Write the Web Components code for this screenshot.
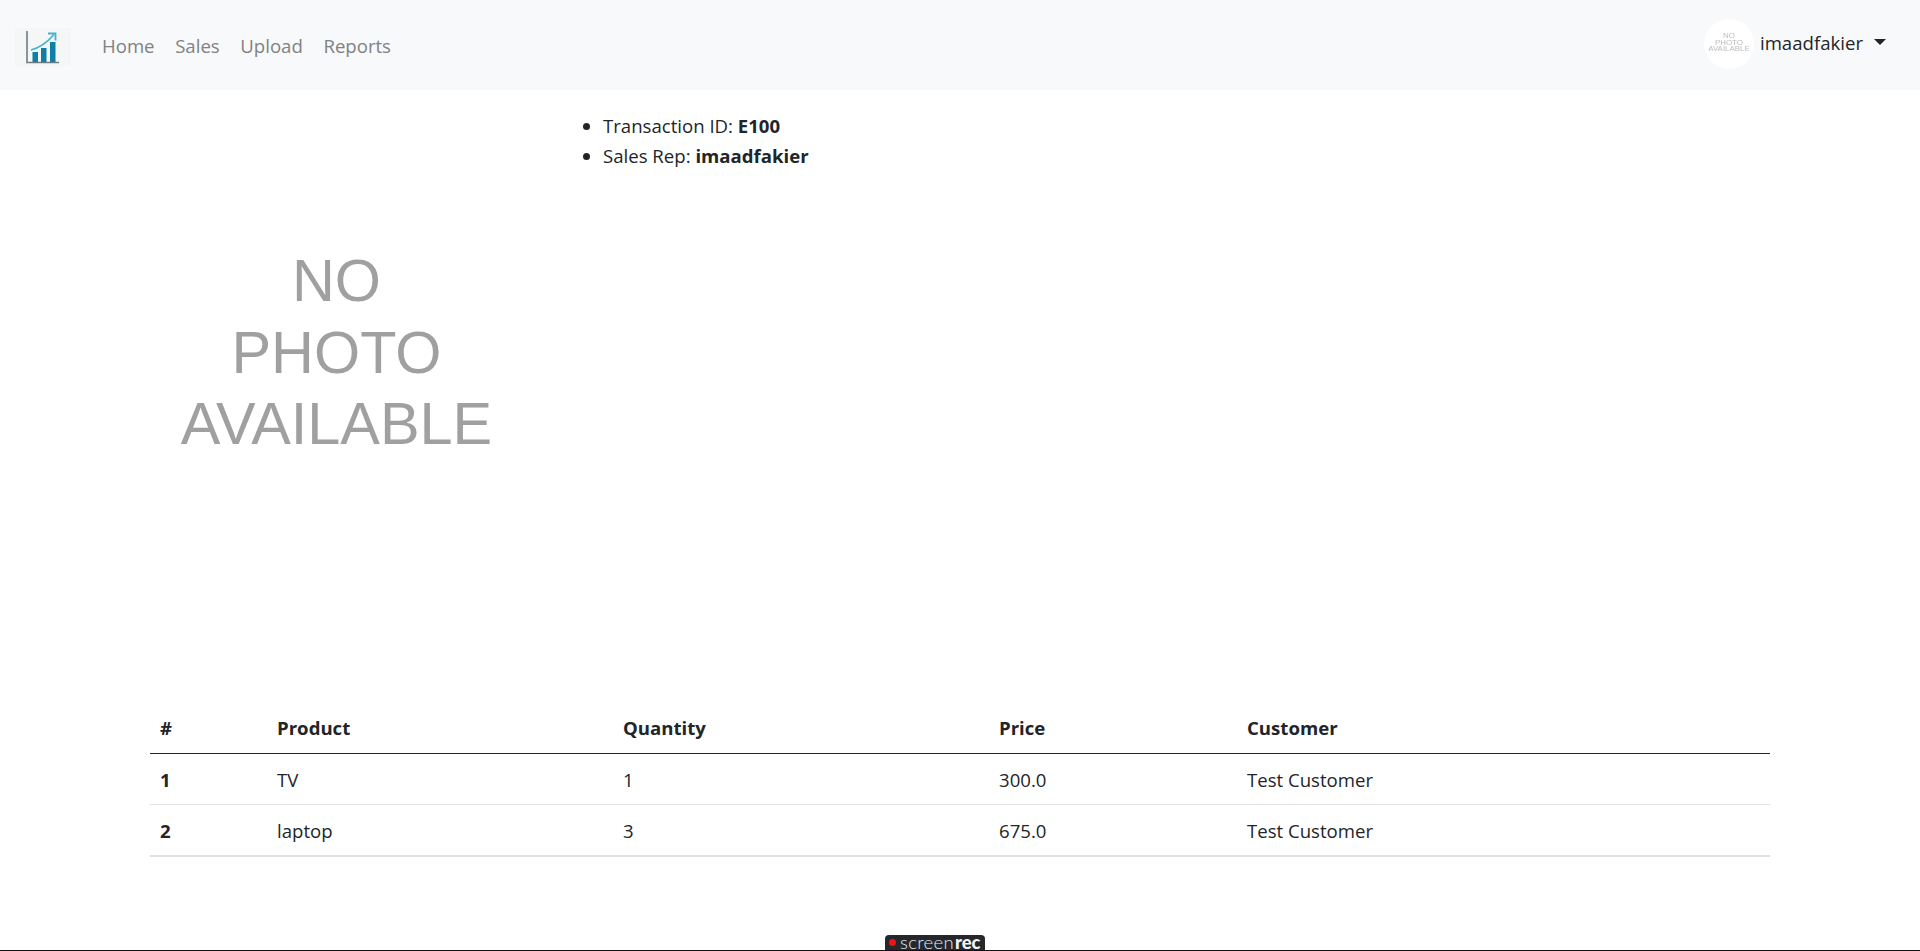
<!DOCTYPE html>
<html lang="en">
<head>
<meta charset="utf-8">
<title>Sale</title>
<style>
html,body{margin:0;padding:0;background:#fff}
body{font-family:"Open Sans","Noto Sans",sans-serif;font-size:18.6px;line-height:30px;color:#212529;height:951px;overflow:hidden;position:relative}
</style>
</head>
<body>
<app-navbar>
  <nav-link>Home</nav-link>
  <nav-link>Sales</nav-link>
  <nav-link>Upload</nav-link>
  <nav-link>Reports</nav-link>
</app-navbar>
<sale-page>
  <sale-photo slot="photo"></sale-photo>
  <sale-facts slot="facts">
    <li>Transaction ID: <b>E100</b></li>
    <li>Sales Rep: <b>imaadfakier</b></li>
  </sale-facts>
  <sale-table slot="table"></sale-table>
</sale-page>
<rec-badge></rec-badge>
<script>
function def(name, css, html, init){
  customElements.define(name, class extends HTMLElement{
    constructor(){super();const r=this.attachShadow({mode:"open"});r.innerHTML="<style>"+css+"</style>"+html;}
    connectedCallback(){if(init)init(this.shadowRoot,this);}
  });
}
def("nav-link",":host{display:block;color:#808183;margin-right:20.6px}","<slot></slot>");
def("brand-logo",":host{display:block;width:56px;height:38px;background:#f5f6f6}svg{display:block}",
`<svg width="56" height="38" viewBox="0 0 56 38">
<path d="M12 3V34.5H44" fill="none" stroke="#6f7c84" stroke-width="1.6"/>
<rect x="17.5" y="24" width="5.5" height="10" fill="#0f7fa6"/>
<rect x="26" y="20" width="5.5" height="14" fill="#0f7fa6"/>
<rect x="35" y="14" width="5.5" height="20" fill="#0f7fa6"/>
<path d="M16 22C24 20 32 14.5 39 6.5" fill="none" stroke="#3fb3cf" stroke-width="1.7"/>
<path d="M33 5.5H40.5V12.5" fill="none" stroke="#3fb3cf" stroke-width="1.8"/>
</svg>`);
def("user-avatar",`:host{display:flex;width:50px;height:50px;border-radius:50%;background:#fff;align-items:center;justify-content:center;overflow:hidden;margin-top:2px}
div{font:7.9px/6.8px "Liberation Sans",sans-serif;color:#bdbdbd;text-align:center;filter:blur(.35px);margin-top:-2px}`,`<div>NO<br>PHOTO<br>AVAILABLE</div>`);
def("app-navbar",`:host{display:flex;align-items:center;height:90px;background:#f8f9fa;padding:0 34px 0 15px;box-sizing:border-box}
.links{display:flex;margin-left:31px;margin-top:2px}
.user{margin-left:auto;display:flex;align-items:center;color:#212529;margin-top:-4px}
.name{margin-left:6px;margin-top:-1px}
.caret{width:0;height:0;border:6px solid transparent;border-top-color:#212529;border-bottom:0;margin-left:11px;margin-top:-2px}
brand-logo{margin-top:4px}`,
`<brand-logo></brand-logo><div class="links"><slot></slot></div>
<div class="user"><user-avatar></user-avatar><span class="name">imaadfakier</span><span class="caret"></span></div>`);
def("sale-photo",`:host{display:flex;width:397px;height:524px;align-items:center;justify-content:center;margin-left:15px}
div{font:59.4px/71.6px "Liberation Sans",sans-serif;color:#a0a0a0;text-align:center;filter:blur(.4px);margin-left:-24px;margin-top:1px}`,`<div>NO<br>PHOTO<br>AVAILABLE</div>`);
def("sale-facts",`:host{display:block;margin:21px 0 0 0}ul{margin:0;padding:0 0 0 40px}
::slotted(li){font-weight:400}`,`<ul><slot></slot></ul>`);
def("sale-page",`:host{display:block;padding:0 135px;box-sizing:border-box;width:100%}
.top{display:flex;gap:16px}
.tbl{margin-top:89px;padding:0 15px}`,
`<div class="top"><slot name="photo"></slot><slot name="facts"></slot></div><div class="tbl"><slot name="table"></slot></div>`);
def("sale-table",`:host{display:block}
.row{display:grid;grid-template-columns:117px 346px 376px 248px 1fr;height:51px;align-items:center;border-bottom:1px solid #dee2e6;box-sizing:border-box;padding-top:1px}
.row>*{padding-left:10px}
.head{font-weight:700;border-bottom:1.5px solid #212529;padding-top:0}
.last{border-bottom:2px solid #dee2e6;height:52px}
b{font-weight:700}`,
`<div class="row head"><span>#</span><span>Product</span><span>Quantity</span><span>Price</span><span>Customer</span></div>
<div class="row"><b>1</b><span>TV</span><span>1</span><span>300.0</span><span>Test Customer</span></div>
<div class="row last"><b>2</b><span>laptop</span><span>3</span><span>675.0</span><span>Test Customer</span></div>`);
def("rec-badge",`:host{position:absolute;left:0;right:0;bottom:0;height:16px;border-bottom:1px solid #111;box-sizing:border-box;display:flex;justify-content:center}
.b{width:100px;height:15px;background:#24282d;border-radius:4px 4px 0 0;display:flex;align-items:center;color:#e8e8e8;font:300 18.5px/11px "Lato",sans-serif;margin-left:-50px;box-sizing:border-box;padding-left:4px}
.d{width:7px;height:7px;border-radius:50%;background:#f01414;margin-right:4px;flex:none}
b{font:900 18.5px/11px "Lato",sans-serif;color:#f4f4f4;margin-left:1px}
span.t{letter-spacing:.3px}`,`<div class="b"><span class="d"></span><span class="t">screen</span><b>rec</b></div>`);
</script>
</body>
</html>
